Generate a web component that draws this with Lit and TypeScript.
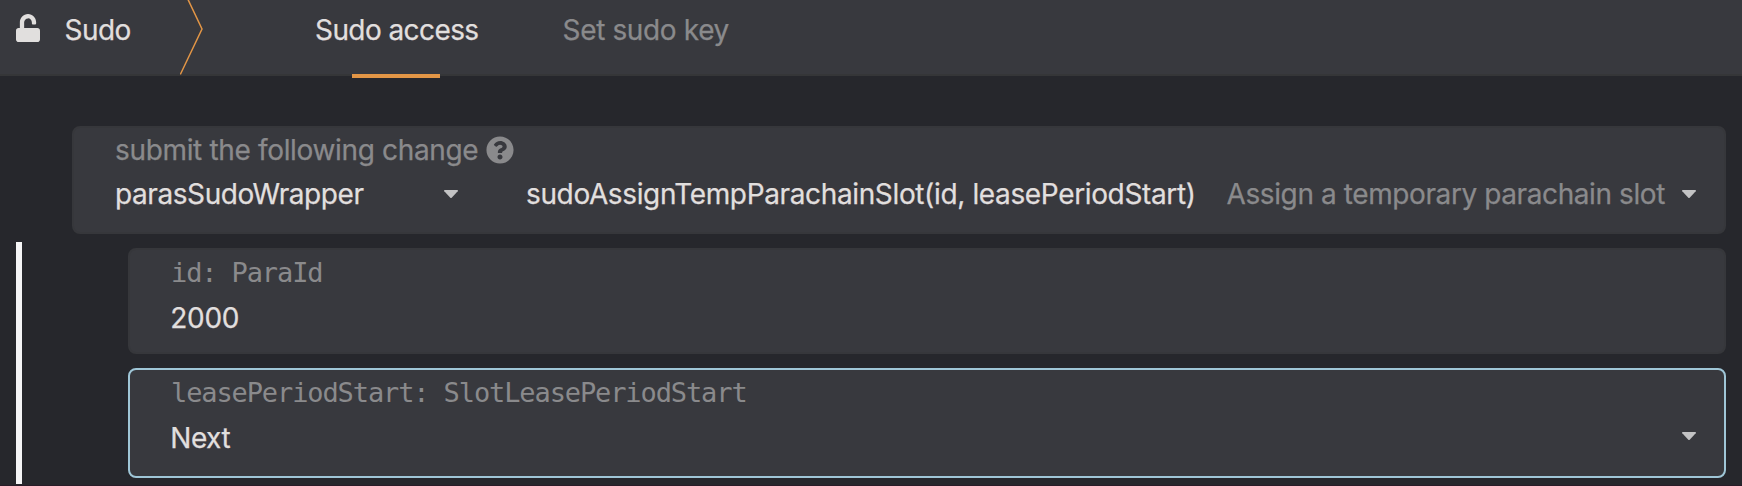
import { LitElement, html, css, svg } from "lit";
import { customElement, property, state } from "lit/decorators.js";
import { classMap } from "lit/directives/class-map.js";

const unlockIcon = svg`<path d="M400 256H152V152.9c0-39.6 31.7-72.5 71.3-72.9 40-.4 72.7 32.1 72.7 72v16c0 13.3 10.7 24 24 24h32c13.3 0 24-10.7 24-24v-16C376 68 307.500-.3 223.500 0 139.500.3 72 69.500 72 153.500V256H48c-26.500 0-48 21.500-48 48v160c0 26.500 21.500 48 48 48h352c26.500 0 48-21.500 48-48V304c0-26.500-21.500-48-48-48z"/>`;
const helpIcon = svg`<path d="M504 256c0 136.997-111.043 248-248 248S8 392.997 8 256C8 119.083 119.043 8 256 8s248 111.083 248 248zM262.655 90c-54.497 0-89.255 22.957-116.549 63.758-3.536 5.286-2.353 12.415 2.715 16.258l34.699 26.310c5.205 3.947 12.621 3.008 16.665-2.122 17.864-22.658 30.113-35.797 57.303-35.797 20.429 0 45.698 13.148 45.698 32.958 0 14.976-12.363 22.667-32.534 33.976C247.128 238.528 216 254.941 216 296v4c0 6.627 5.373 12 12 12h56c6.627 0 12-5.373 12-12v-1.333c0-28.462 83.186-29.647 83.186-106.667 0-58.002-60.165-102-116.531-102zM256 338c-25.365 0-46 20.635-46 46 0 25.364 20.635 46 46 46s46-20.636 46-46c0-25.364-20.635-46-46-46z"/>`;

@customElement("drop-caret")
class DropCaret extends LitElement {
  static styles = css`
    :host { display: block; width: 14px; height: 8px; }
    svg { display: block; fill: #c3c3c4; }
  `;
  render() {
    return html`<svg width="14" height="8" viewBox="0 0 14 8"><path d="M.6 0h12.800q.9.400.3 1.200L7.700 7.700q-.7.600-1.400 0L.3 1.200Q-.3.400.6 0z"/></svg>`;
  }
}

@customElement("param-field")
class ParamField extends LitElement {
  static styles = css`
    :host { display: block; }
    .field {
      box-sizing: border-box;
      height: 106px;
      padding: 3px 28px 0 41px;
      border: 2px solid #36373b;
      border-radius: 8px;
      background: #38393e;
    }
    .field.focused { height: 110px; border-color: #9fc6d7; }
    .label {
      font: 27px/40px "DejaVu Sans Mono", monospace;
      letter-spacing: -1.11px;
      color: #8a8a8c;
      white-space: pre;
      -webkit-text-stroke: 0;
    }
    .value {
      display: flex;
      align-items: center;
      justify-content: space-between;
      margin-top: 5px;
      line-height: 40px;
      letter-spacing: -0.3px;
      color: #e1dfde;
    }
    .value span { margin-left: -0.7px; }
    .value drop-caret { margin-bottom: 4px; }
    .tight { letter-spacing: -0.5px; }
  `;
  @property() label = "";
  @property() value = "";
  @property({ type: Boolean }) select = false;
  render() {
    return html`<div class=${classMap({ field: true, focused: this.select })}>
      <div class="label">${this.label}</div>
      <div class="value">
        <span class=${classMap({ tight: this.select })}>${this.value}</span>
        ${this.select ? html`<drop-caret></drop-caret>` : null}
      </div>
    </div>`;
  }
}

@customElement("app-root")
class AppRoot extends LitElement {
  static styles = css`
    :host {
      display: flex;
      flex-direction: column;
      box-sizing: border-box;
      height: 486px;
      overflow: hidden;
      border-bottom: 1px solid #291c28;
      background: #26272c;
      color: #e1dfde;
      font: 28px/40px Inter, sans-serif;
      white-space: nowrap;
      -webkit-text-stroke: 0.25px;
    }
    header {
      display: flex;
      box-sizing: border-box;
      height: 76px;
      border-bottom: 2px solid #353638;
      background: #38393e;
    }
    .title {
      display: flex;
      align-items: flex-start;
      box-sizing: border-box;
      width: 180px;
      padding-left: 16px;
      letter-spacing: -0.52px;
    }
    .title svg { margin-top: 14px; fill: #e1dfde; }
    .title span { margin: 10px 0 0 24.500px; }
    .divider { width: 24px; fill: none; stroke: #e39646; stroke-width: 1.500; }
    nav { display: flex; margin-left: 69px; }
    .tab {
      position: relative;
      padding: 10px 42px 0;
      letter-spacing: -0.36px;
      color: #8a8a8c;
    }
    .tab.active { letter-spacing: -0.58px; color: #e1dfde; }
    .tab.active::after {
      content: "";
      position: absolute;
      left: calc(50% - 44.500px);
      top: 74px;
      width: 88px;
      height: 4px;
      background: #e39646;
    }
    main { padding: 50px 16px 0; }
    .call {
      box-sizing: border-box;
      height: 108px;
      margin-left: 56px;
      padding: 2px 28px 0 41px;
      border: 2px solid #36373b;
      border-radius: 8px;
      background: #38393e;
    }
    .hint {
      display: flex;
      align-items: center;
      gap: 8px;
      letter-spacing: -0.34px;
      color: #8a8a8c;
    }
    .hint svg { fill: #8a8a8c; }
    .row { display: flex; align-items: center; margin-top: 4px; }
    .section { width: 329px; letter-spacing: -0.42px; }
    .method { margin-left: 68px; letter-spacing: -0.36px; }
    .doc { margin-left: 31px; letter-spacing: -0.405px; color: #8a8a8c; }
    .end { margin-left: auto; }
    .params {
      display: flex;
      flex-direction: column;
      gap: 14px;
      box-sizing: border-box;
      height: 242px;
      margin-top: 8px;
      padding: 6px 0 0 106px;
      border-left: 6px solid #f5f5f6;
    }
  `;
  @state() private tabs = ["Sudo access", "Set sudo key"];
  @state() private active = 0;
  render() {
    return html`
      <header>
        <div class="title">
          <svg width="24" height="28" viewBox="0 0 448 512" preserveAspectRatio="none">${unlockIcon}</svg>
          <span>Sudo</span>
        </div>
        <svg class="divider" height="75" viewBox="0 0 24 75"><path d="M8 -.5L22 29L.3 74.500"/></svg>
        <nav>
          ${this.tabs.map((t, i) => html`<div class=${classMap({ tab: true, active: i === this.active })} @click=${() => (this.active = i)}>${t}</div>`)}
        </nav>
      </header>
      <main>
        <section class="call">
          <div class="hint">
            <span>submit the following change</span>
            <svg width="28" height="28" viewBox="0 0 512 512">${helpIcon}</svg>
          </div>
          <div class="row">
            <span class="section">parasSudoWrapper</span>
            <drop-caret></drop-caret>
            <span class="method">sudoAssignTempParachainSlot(id, leasePeriodStart)</span>
            <span class="doc">Assign a temporary parachain slot</span>
            <drop-caret class="end"></drop-caret>
          </div>
        </section>
        <section class="params">
          <param-field label="id: ParaId" value="2000"></param-field>
          <param-field label="leasePeriodStart: SlotLeasePeriodStart" value="Next" select></param-field>
        </section>
      </main>
    `;
  }
}
